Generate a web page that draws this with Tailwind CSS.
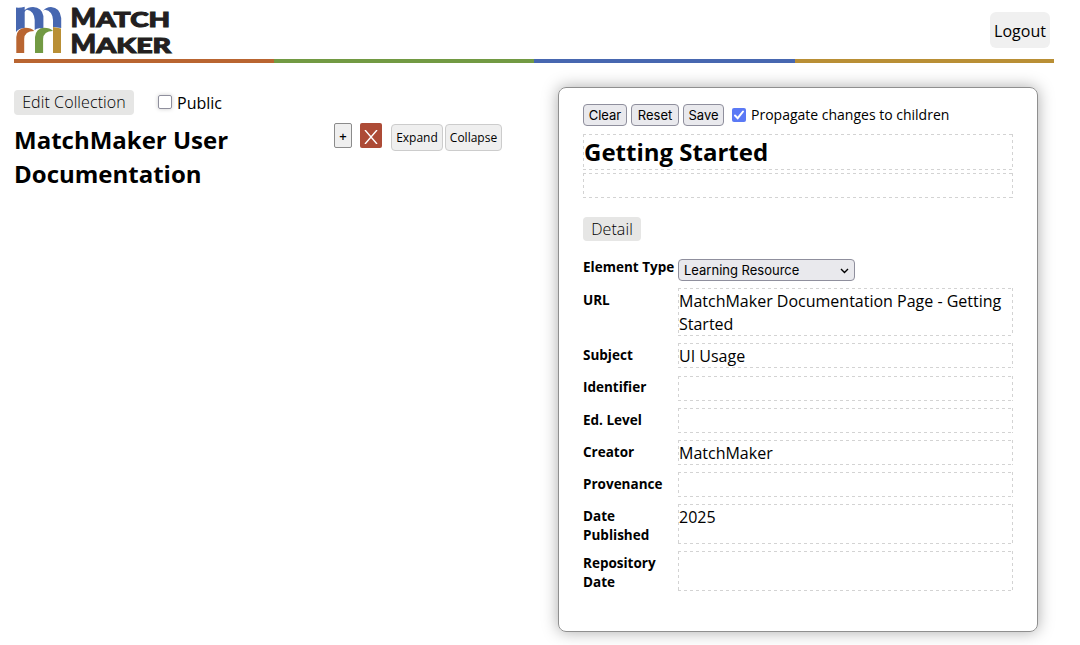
<!DOCTYPE html>
<html lang="en"><head><meta charset="utf-8"><title>MatchMaker</title>
<script src="https://cdn.jsdelivr.net/npm/@tailwindcss/browser@4"></script></head>
<body class="bg-white text-black font-['Open_Sans',sans-serif] h-[645px] overflow-hidden">
<header class="mx-[14px] w-[1040px] h-[63px] flex flex-col">
 <div class="h-[59px] flex justify-between">
  <svg class="w-[166px] h-[59px]" viewBox="14 0 166 59">
   <path fill="#4767b0" d="M16 7.5Q20 8 24.7 6.8V10Q28 7 33 7Q42 7.5 43.4 16V10.5Q46 7 51 7Q60 7.5 61.2 18V28L53 27V20Q52.5 11 45 9.8Q43.8 10 43.4 11V29Q38 27 34.7 30V20Q34 11 27 9.8Q25.3 10 24.7 12V28Q19 28 16 32Z"/>
   <path fill="#b96531" d="M16.3 53V37Q17 28 25.5 27.7Q31 27.7 34.3 31Q24.5 31 24.2 39V53Z"/>
   <path fill="#729a43" d="M35 53V37Q36 28 44 27.7Q50 27.7 53 31Q43.5 31 43.1 39V53Z"/>
   <path fill="#b98f35" d="M53 53V27L61 28.5V53Z"/>
   <g fill="#231f20" stroke="#231f20" stroke-width="1" font-family="Lato" font-weight="900"><text x="70.5" y="27" font-size="27"><tspan>M</tspan><tspan font-size="21" textLength="74" lengthAdjust="spacingAndGlyphs">ATCH</tspan></text><text x="70.5" y="53" font-size="27"><tspan>M</tspan><tspan font-size="21" textLength="75" lengthAdjust="spacingAndGlyphs">AKER</tspan></text></g>
  </svg>
  <button class="mt-3 mr-1 w-[60px] h-9 rounded-md bg-[#f0f0f0] text-base pt-[2px]">Logout</button>
 </div>
 <div class="h-1 grid grid-cols-[260px_260px_261px_259px]"><i class="bg-[#b96531]"></i><i class="bg-[#729a43]"></i><i class="bg-[#4767b0]"></i><i class="bg-[#b98f35]"></i></div>
</header>
<main class="flex pl-[14px]">
 <section class="w-[544px] pt-[27px]">
  <div class="flex h-[25px] items-center"><button class="w-[120px] h-[25px] rounded bg-[#e6e6e5] font-light leading-[25px] tracking-[0.1px]">Edit Collection</button>
   <span class="ml-6 mb-[2px] size-[14px] border border-[#8f8f9d] rounded-[2px] shadow-[0_0_4px_#ccc]"></span><span class="ml-[5px] mt-px">Public</span></div>
  <div class="flex mt-2"><h1 class="w-[320px] text-2xl leading-[34px] font-bold"><span class="block w-[240px]">MatchMaker User Documentation</span></h1>
   <button class="w-[18px] h-[25px] border border-[#8b8b8b] rounded-[2px] bg-[#efefef] text-[13px] font-semibold leading-5">+</button>
   <button class="ml-2 w-[22px] h-[25px] rounded-[2px] bg-[#ad4b36] flex items-center justify-center"><svg class="size-[14px] mt-[2px]" viewBox="0 0 14 14"><path d="M1 0L13 14M13 0L1 14" stroke="white" stroke-width="1.4"/></svg></button>
   <button class="ml-[9px] mt-px w-[52px] h-[27px] border border-[#ccc] rounded bg-[#efefef] text-[12px]">Expand</button>
   <button class="ml-[2px] mt-px w-[57px] h-[27px] border border-[#ccc] rounded bg-[#efefef] text-[12px]">Collapse</button></div>
 </section>
 <section class="mt-6 w-[480px] h-[545px] border border-[#8f8f8f] rounded-lg shadow-[0_0_16px_#aaa] px-6 pt-4 [&_.box]:p-px [&_.box]:[background:repeating-linear-gradient(90deg,#d3d3d3_0_3px,transparent_3px_6px)_top/100%_1px_no-repeat,repeating-linear-gradient(90deg,#d3d3d3_0_3px,transparent_3px_6px)_bottom/100%_1px_no-repeat,repeating-linear-gradient(#d3d3d3_0_3px,transparent_3px_6px)_left/1px_100%_no-repeat,repeating-linear-gradient(#d3d3d3_0_3px,transparent_3px_6px)_right/1px_100%_no-repeat]">
  <div class="flex items-center h-[22px] gap-1 text-[13px] font-['Inter',sans-serif]"><button class="w-11 h-[22px] border border-[#8f8f9d] rounded bg-[#e9e9ed] leading-5">Clear</button><button class="w-12 h-[22px] border border-[#8f8f9d] rounded bg-[#e9e9ed] leading-5">Reset</button><button class="w-[41px] h-[22px] border border-[#8f8f9d] rounded bg-[#e9e9ed] leading-5">Save</button>
   <svg class="ml-1 size-[14px]" viewBox="0 0 14 14"><rect width="14" height="14" rx="2" fill="#5b79f5"/><path d="M3 7.5L5.7 10.2L11 3.5" fill="none" stroke="white" stroke-width="2" stroke-linecap="round"/></svg><span class="ml-[1px] -mt-[2px] text-[14px] font-['Open_Sans']">Propagate changes to children</span></div>
  <div class="box mt-2 h-9 text-2xl leading-[34px] font-bold">Getting Started</div>
  <div class="box mt-[3px] h-[25px]"></div>
  <button class="mt-[19px] w-[58px] h-6 rounded bg-[#e6e6e5] font-light block leading-6 tracking-[0.1px]">Detail</button>
  <div class="mt-[18px] grid grid-cols-[95px_335px] grid-rows-[22px_48px_26px_25px_25px_25px_25px_40px_40px] gap-y-[7px] text-base leading-[23px] [&>b]:text-[13.5px] [&>b]:leading-[19px] [&>b]:pt-[3px] [&>.box]:pt-[2px]">
   <b class="whitespace-nowrap -mt-[4px]">Element Type</b><button class="w-[177px] h-[22px] border border-[#8f8f9d] rounded bg-[#e9e9ed] text-[13px] leading-5 font-['Inter'] px-[5px] flex items-center justify-between">Learning Resource<svg class="size-[9px]" viewBox="0 0 9 9"><path d="M1 3L4.5 6.5L8 3" fill="none" stroke="black" stroke-width="1.4"/></svg></button>
   <b>URL</b><div class="box">MatchMaker Documentation Page - Getting Started</div>
   <b>Subject</b><div class="box h-[25px]">UI Usage</div><b class="-mt-px">Identifier</b><div class="box"></div><b>Ed. Level</b><div class="box"></div><b>Creator</b><div class="box">MatchMaker</div><b>Provenance</b><div class="box"></div><b>Date<br>Published</b><div class="box">2025</div><b>Repository<br>Date</b><div class="box"></div>
  </div>
 </section>
</main></body></html>
